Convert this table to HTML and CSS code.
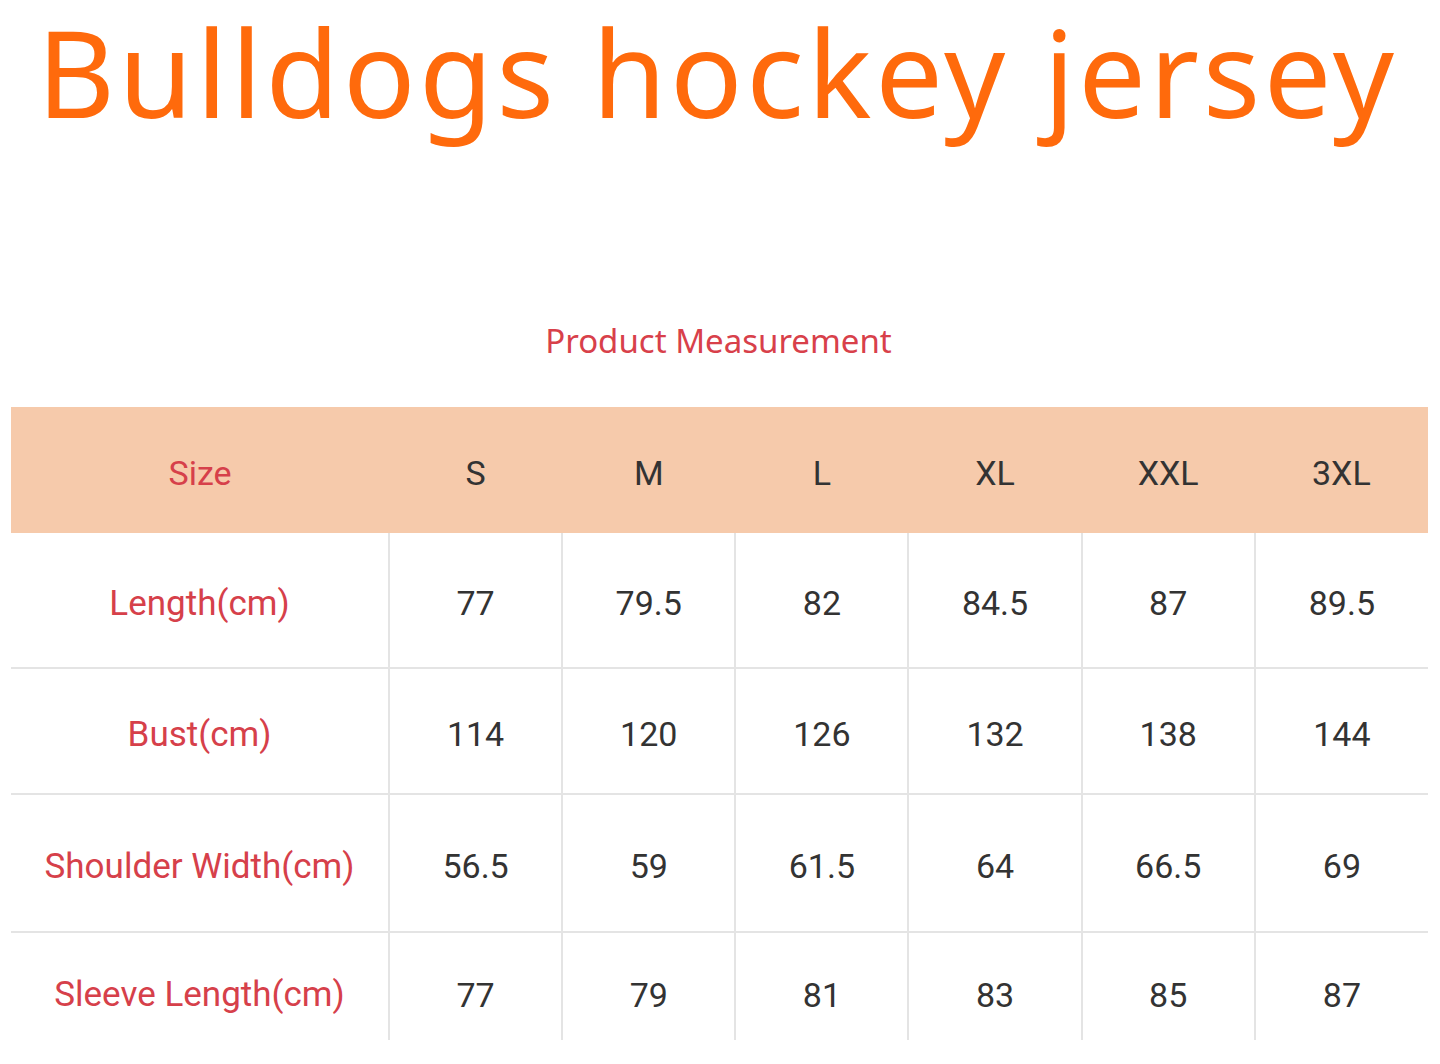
FILE: index.html
```html
<!DOCTYPE html>
<html lang="en">
<head>
<meta charset="utf-8">
<title>Bulldogs hockey jersey</title>
<link rel="stylesheet" href="styles.css">
</head>
<body>
<h1 class="title">Bulldogs hockey jersey</h1>
<div class="sheet">
  <p class="caption">Product Measurement</p>
  <table class="sizes">
    <colgroup>
      <col class="c-label">
      <col><col><col><col><col><col>
    </colgroup>
    <thead>
      <tr class="head">
        <th class="label">Size</th>
        <th>S</th><th>M</th><th>L</th><th>XL</th><th>XXL</th><th>3XL</th>
      </tr>
    </thead>
    <tbody>
      <tr class="r1">
        <td class="label">Length(cm)</td>
        <td>77</td><td>79.5</td><td>82</td><td>84.5</td><td>87</td><td>89.5</td>
      </tr>
      <tr class="r2">
        <td class="label">Bust(cm)</td>
        <td>114</td><td>120</td><td>126</td><td>132</td><td>138</td><td>144</td>
      </tr>
      <tr class="r3">
        <td class="label">Shoulder Width(cm)</td>
        <td>56.5</td><td>59</td><td>61.5</td><td>64</td><td>66.5</td><td>69</td>
      </tr>
      <tr class="r4">
        <td class="label">Sleeve Length(cm)</td>
        <td>77</td><td>79</td><td>81</td><td>83</td><td>85</td><td>87</td>
      </tr>
    </tbody>
  </table>
</div>
</body>
</html>
```
FILE: styles.css
```css
html, body {
  margin: 0;
  padding: 0;
  background: #ffffff;
}

.title {
  margin: 0;
  padding: 4px 0 0 37px;
  height: 170px;
  box-sizing: border-box;
  font-family: "Noto Sans", "Open Sans", sans-serif;
  font-weight: 400;
  font-size: 120px;
  line-height: 136px;
  color: #ff6a0c;
  white-space: nowrap;
  letter-spacing: 3.6px;
}

.sheet {
  padding: 0 12px 0 11px;
}

.caption {
  margin: 150px 0 0;
  height: 87px;
  text-align: center;
  font-family: "Noto Sans", "Open Sans", sans-serif;
  font-size: 33px;
  line-height: 42px;
  color: #d8404a;
  padding-right: 2px;
}

.sizes {
  width: 1417px;
  border-collapse: collapse;
  table-layout: fixed;
  font-family: "Roboto", "Liberation Sans", sans-serif;
  font-size: 34px;
  color: #333333;
}

.c-label {
  width: 378px;
}

.sizes th,
.sizes td {
  padding: 6px 0 0;
  text-align: center;
  font-weight: 400;
}

.sizes td {
  border-left: 2px solid #e4e4e4;
  border-bottom: 2px solid #e4e4e4;
}

.sizes td.label {
  border-left: none;
  font-size: 35px;
}

.head {
  background: #f6caab;
  height: 126px;
}

.label {
  color: #d6404a;
}

.r1 { height: 135px; }
.r2 { height: 126px; }
.r3 { height: 138px; }
.r4 { height: 108px; }

.sizes .r4 td {
  border-bottom: none;
  padding-top: 16px;
}
```
